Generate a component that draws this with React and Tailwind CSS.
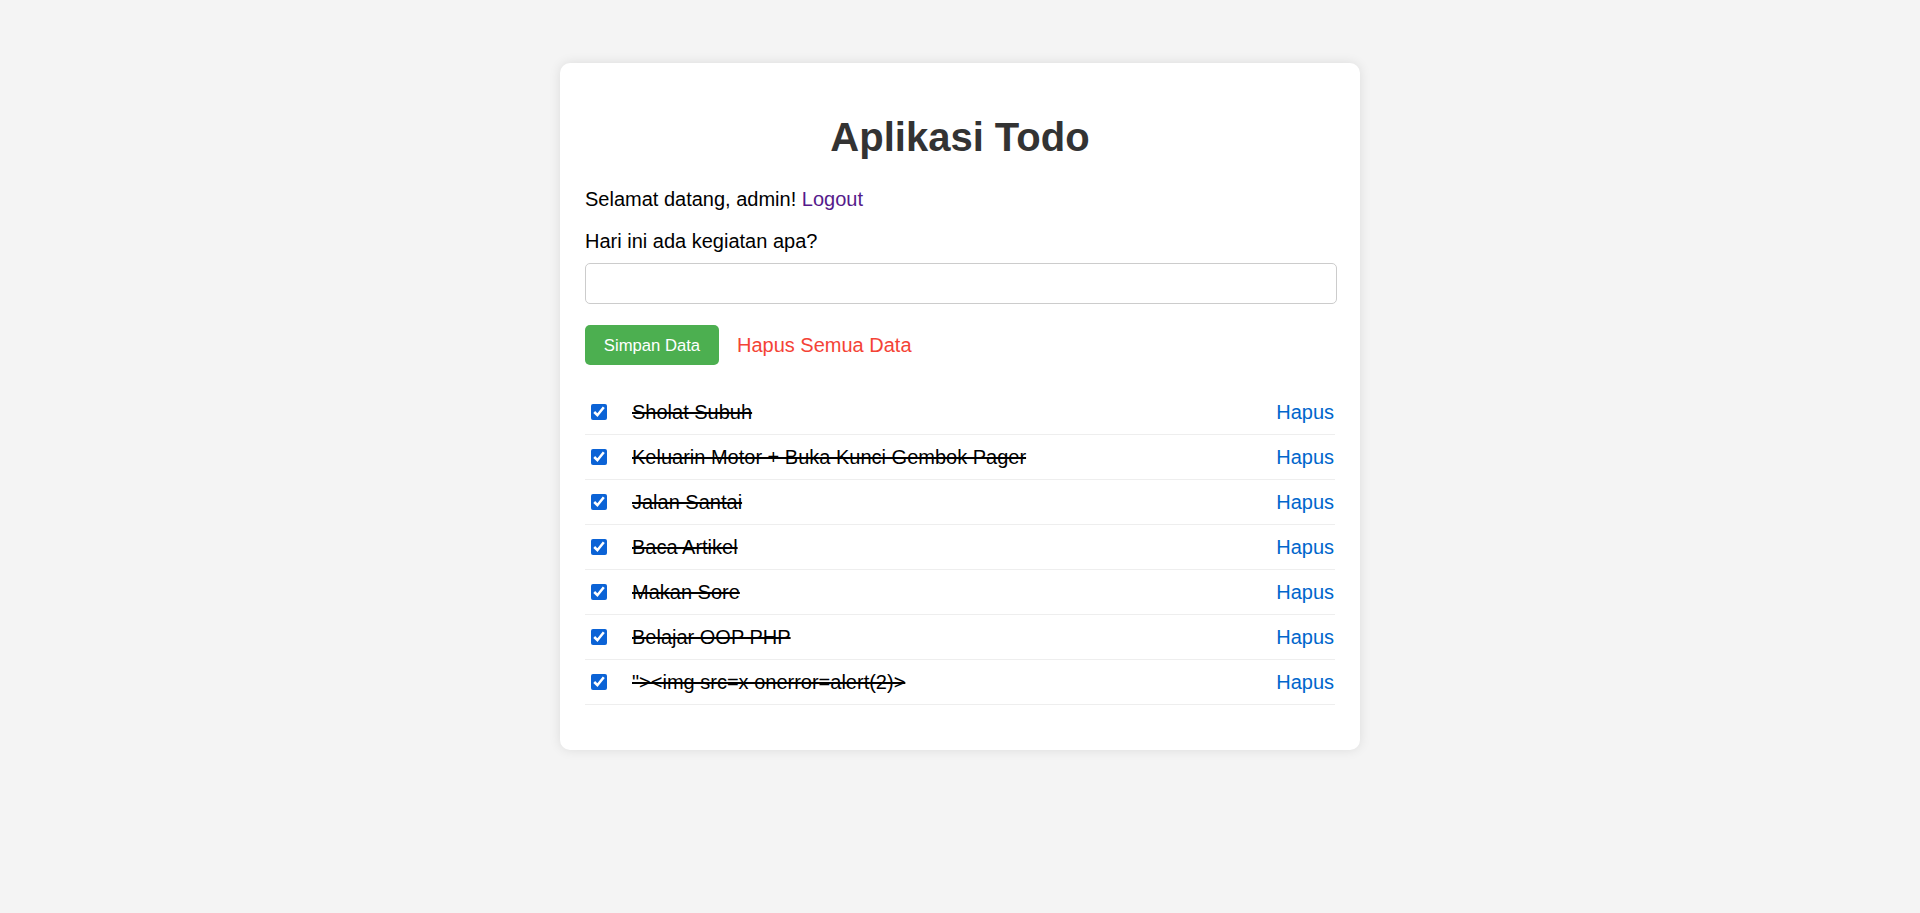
const todos = [
  'Sholat Subuh',
  'Keluarin Motor + Buka Kunci Gembok Pager',
  'Jalan Santai',
  'Baca Artikel',
  'Makan Sore',
  'Belajar OOP PHP',
  '"><img src=x onerror=alert(2)>',
]

const App = () => {
  return (
    <div className="min-h-[913px] bg-[#f4f4f4] pt-[63px] font-['Liberation_Sans',Arial,sans-serif] text-[20px] text-black">
      <div className="mx-auto w-[800px] rounded-[10px] bg-white p-[25px] pb-[45px] shadow-[0_0_12px_rgba(0,0,0,0.1)]">
        <h1 className="mt-[27px] mb-[28px] text-center text-[40px] leading-[45px] font-bold text-[#333]">Aplikasi Todo</h1>
        <p className="mb-[19px] leading-[23px]">
          Selamat datang, admin! <a href="#" className="text-[#551a8b]">Logout</a>
        </p>
        <label className="mb-[10px] block leading-[23px]">Hari ini ada kegiatan apa?</label>
        <input type="text" className="mb-[21px] block h-[41px] w-[calc(100%+2px)] rounded-[5px] border border-[#ccc] px-[10px] outline-none" />
        <div className="mb-[25px] flex items-center gap-[18px]">
          <button className="h-[40px] w-[134px] rounded-[5px] bg-[#4caf50] text-[16.67px] text-white">Simpan Data</button>
          <a href="#" className="leading-[23px] text-[#f44336]">Hapus Semua Data</a>
        </div>
        <ul>
          {todos.map((t, i) => (
            <li key={i} className="flex h-[45px] items-center border-b border-[#eee]">
              <input type="checkbox" checked readOnly className="ml-[6px] mr-[25px] h-[16px] w-[16px] accent-[#0b63d6]" />
              <span className="flex-1 leading-[23px] line-through">{t}</span>
              <a href="#" className="mr-[1px] leading-[23px] text-[#0066cc]">Hapus</a>
            </li>
          ))}
        </ul>
      </div>
    </div>
  )
}

export default App
